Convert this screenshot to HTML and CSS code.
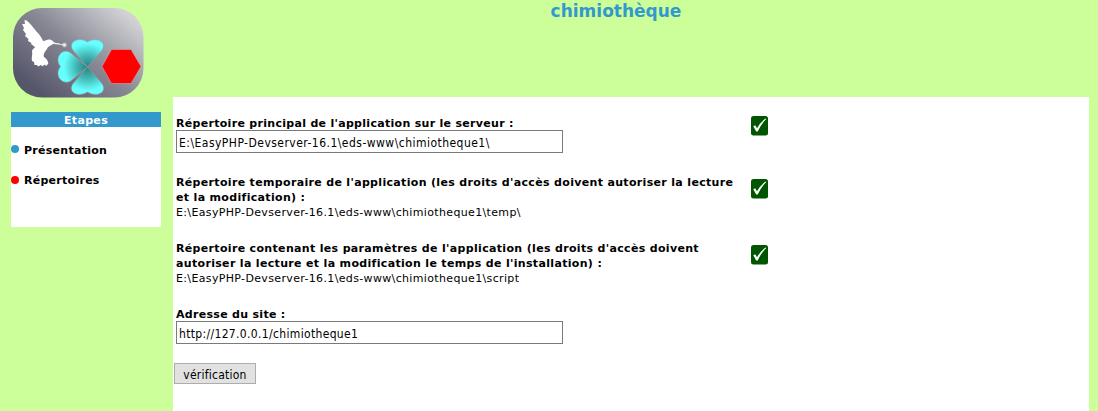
FILE: index.html
```html
<!DOCTYPE html>
<html lang="fr">
<head>
<meta charset="utf-8">
<title>chimiothèque</title>
<link rel="stylesheet" href="styles.css">
</head>
<body>
<svg width="0" height="0" class="defs">
  <symbol id="check" viewBox="0 0 17 20">
    <rect width="17" height="19.5" rx="2.5" fill="#005500"/>
    <path d="M2.3 10.2 L4.2 9.2 L6 12.2 Q9.5 6 14.5 2.5 L15.3 3 Q10 8 6.7 15.5 L5.2 15.5 Z" fill="#fff"/>
  </symbol>
</svg>
<div class="page">
  <aside class="side">
    <svg class="logo" width="131" height="90" viewBox="0 0 131 90">
      <defs>
        <linearGradient id="bg" x1="0.12" y1="0.85" x2="0.95" y2="0.15">
          <stop offset="0" stop-color="#56566b"/><stop offset="0.5" stop-color="#898995"/><stop offset="1" stop-color="#d2d2d6"/>
        </linearGradient>
        <radialGradient id="leaf" gradientUnits="userSpaceOnUse" cx="74.500" cy="59" r="28">
          <stop offset="0" stop-color="#27817f"/><stop offset="0.4" stop-color="#42b5b2"/><stop offset="0.85" stop-color="#66ffff"/>
        </radialGradient>
      </defs>
      <rect width="130.500" height="89.500" rx="29" fill="url(#bg)"/>
      <path d="M11.500 12 C15 12 19 18 23 23 C27 27 29 30 30 33 C33 33 34 31 37 31.500 C39 32 40 33 41 34.500 L50 36.500 L40 36 C37 38 35 38 34 41 C32 44 30 46 31 49 C34 51 36 54 35 57 L34 56 L33.500 58 L31 56.500 L30 58.500 L28 57 L25 58.500 L24 57 L21.500 57 L21 54 L19 53 C18 49 20 46 19 43 C19 41 22 40 22 39 L18 36 L18.500 35 L15 33 L15.500 31 L12 28 L13 26 L10 22 L11 20 L9 16 L12 16 Z" fill="#fff"/>
      <path d="M40 35 L51 37" stroke="#eee" stroke-width=".8"/>
      <circle cx="51.500" cy="37" r="2.400" fill="#fff" opacity=".45"/><circle cx="51.500" cy="37" r="1.100" fill="#fff"/>
      <g fill="url(#leaf)" stroke="#9a9aa6" stroke-width=".6">
        <path d="M74.500 59 L60.500 43 C53.500 34 66 28 74.500 34 C83 28 95.500 34 88.500 43 Z"/>
        <path d="M74.500 59 L60.500 75 C53.500 84 65 90 74.500 84 C84 90 95.500 84 88.500 75 Z"/>
        <path d="M74.500 59 L59 46 C51 38 40 49 47.500 58.500 C40 68 51 79 59 72 Z"/>
      </g>
      <path d="M98.500 41.500 H118 L128 58.500 L118 75.500 H98.500 L89 58.500 Z" fill="red" stroke="#c9b8bf" stroke-width=".5"/>
    </svg>
    <nav class="steps">
      <h2 class="steps-title">Etapes</h2>
      <ul class="steps-list">
        <li class="step"><span class="dot"></span>Présentation</li>
        <li class="step current"><span class="dot"></span>Répertoires</li>
      </ul>
    </nav>
  </aside>
  <div class="content">
    <h1 class="title">chimiothèque</h1>
    <form class="panel">
      <div class="row row-root">
        <div class="field"><label for="root">Répertoire principal de l'application sur le serveur :</label>
        <input class="text" id="root" type="text" value="E:\EasyPHP-Devserver-16.1\eds-www\chimiotheque1\"></div>
        <svg class="check"><use href="#check"/></svg>
      </div>
      <div class="row row-temp">
        <div class="field"><b>Répertoire temporaire de l'application (les droits d'accès doivent autoriser la lecture<br>et la modification) :</b>
        <span class="path">E:\EasyPHP-Devserver-16.1\eds-www\chimiotheque1\temp\</span></div>
        <svg class="check"><use href="#check"/></svg>
      </div>
      <div class="row row-script">
        <div class="field"><b>Répertoire contenant les paramètres de l'application (les droits d'accès doivent<br>autoriser la lecture et la modification le temps de l'installation) :</b>
        <span class="path">E:\EasyPHP-Devserver-16.1\eds-www\chimiotheque1\script</span></div>
        <svg class="check"><use href="#check"/></svg>
      </div>
      <div class="row row-url">
        <div class="field"><label for="url">Adresse du site :</label>
        <input class="text url" id="url" type="text" value="http://127.0.0.1/chimiotheque1"></div>
      </div>
      <button class="submit" type="button">vérification</button>
    </form>
  </div>
</div>
</body>
</html>
```
FILE: styles.css
```css
* { box-sizing: border-box; }
body {
  margin: 0;
  background: #ccff99;
  color: #000;
  font: 11px/15px Verdana, "DejaVu Sans", sans-serif;
  letter-spacing: 0.33px;
  overflow: hidden;
}
.defs { display: none; }
.page { display: grid; grid-template-columns: 173px 916px; height: 411px; }
.side { padding: 8px 12px 0 11px; }
.logo { display: block; margin-left: 2px; }
.steps { margin-top: 14px; height: 115px; background: #fff; }
.steps-title {
  margin: 0;
  height: 15px;
  background: #3399cc;
  color: #fff;
  font-size: 11px;
  line-height: 17px;
  text-align: center;
}
.steps-list {
  display: flex;
  flex-direction: column;
  gap: 15px;
  margin: 0;
  padding: 15px 0 0;
  list-style: none;
  font-weight: bold;
  line-height: 17px;
  letter-spacing: 0.27px;
}
.step { display: flex; gap: 5px; height: 15px; }
.dot { width: 8px; height: 8px; margin-top: 3px; border-radius: 50%; background: #3399cc; }
.current .dot { margin-top: 4px; background: red; }
.content { display: flex; flex-direction: column; }
.title {
  margin: 0;
  height: 97px;
  padding: 1px 30px 0 0;
  color: #3399cc;
  font-size: 17px;
  line-height: 20px;
  letter-spacing: 0;
  text-align: center;
}
.panel { flex: 1; padding: 18px 0 0 3px; background: #fff; }
.row { display: grid; grid-template-columns: 575px 17px; white-space: nowrap; }
.row-root { height: 59px; }
.row-temp { height: 66px; }
.row-script { height: 66px; }
.row-url { height: 57px; }
.field label { display: block; height: 15px; line-height: 17px; font-weight: bold; letter-spacing: 0.3px; }
.row-temp .field, .row-script .field { padding-top: 1px; }
.field b { display: block; }
.path { display: block; letter-spacing: 0.35px; }
.check { display: block; width: 17px; height: 20px; margin-top: 1px; }
.row-temp .check, .row-script .check { margin-top: 5px; }
.text {
  display: block;
  width: 387px;
  height: 23px;
  margin: 0;
  padding: 2px 2px 0;
  border: 1px solid #7a7a7a;
  background: #fff;
  color: #000;
  font: 12px "DejaVu Sans Condensed", "DejaVu Sans", sans-serif;
  font-stretch: condensed;
  letter-spacing: 0.47px;
}
.url { letter-spacing: 0.34px; }
.submit {
  display: block;
  width: 82px;
  height: 21px;
  margin: 0 0 0 -2px;
  padding: 2px 0 0;
  border: 1px solid #adadad;
  background: #e1e1e1;
  color: #000;
  font: 12px "DejaVu Sans Condensed", "DejaVu Sans", sans-serif;
  font-stretch: condensed;
  letter-spacing: 0.23px;
}
```
